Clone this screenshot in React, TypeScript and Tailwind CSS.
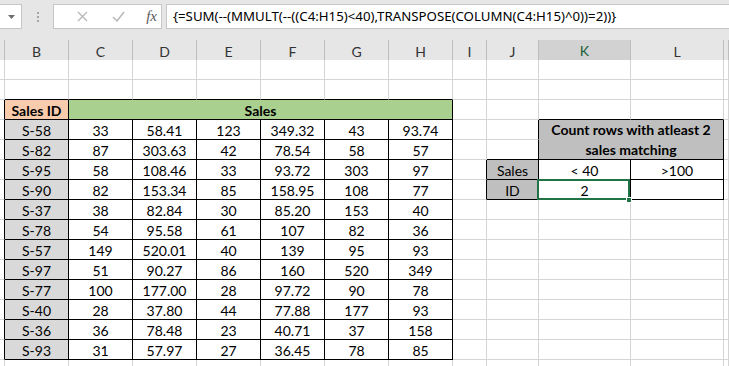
import React from 'react';

type Cell = {
    text?: string;
    bold?: boolean;
    bg?: string;
    colSpan?: number;
    rowSpan?: number;
    skip?: boolean;
    wrap?: boolean;
    selected?: boolean;
};

const COL_LETTERS = ['', 'B', 'C', 'D', 'E', 'F', 'G', 'H', 'I', 'J', 'K', 'L', ''];
const NUM_COLS = 13;
const NUM_ROWS = 16;

const salesData: [string, string[]][] = [
    ['S-58', ['33', '58.41', '123', '349.32', '43', '93.74']],
    ['S-82', ['87', '303.63', '42', '78.54', '58', '57']],
    ['S-95', ['58', '108.46', '33', '93.72', '303', '97']],
    ['S-90', ['82', '153.34', '85', '158.95', '108', '77']],
    ['S-37', ['38', '82.84', '30', '85.20', '153', '40']],
    ['S-78', ['54', '95.58', '61', '107', '82', '36']],
    ['S-57', ['149', '520.01', '40', '139', '95', '93']],
    ['S-97', ['51', '90.27', '86', '160', '520', '349']],
    ['S-77', ['100', '177.00', '28', '97.72', '90', '78']],
    ['S-40', ['28', '37.80', '44', '77.88', '177', '93']],
    ['S-36', ['36', '78.48', '23', '40.71', '37', '158']],
    ['S-93', ['31', '57.97', '27', '36.45', '78', '85']],
];

// rows are 1-based like the sheet, cols 0 = A (narrow), 1 = B ... 12 = M
function buildSheet(): Cell[][] {
    const sheet: Cell[][] = [];
    for (let r = 0; r <= NUM_ROWS; r++) {
        sheet.push(Array.from({ length: NUM_COLS }, () => ({} as Cell)));
    }

    // header row of the table
    sheet[3][1] = { text: 'Sales ID', bold: true, bg: 'peach' };
    sheet[3][2] = { text: 'Sales', bold: true, bg: 'green', colSpan: 6 };
    for (let c = 3; c <= 7; c++) sheet[3][c] = { skip: true };

    salesData.forEach(([id, values], i) => {
        const r = 4 + i;
        sheet[r][1] = { text: id, bg: 'gray' };
        values.forEach((v, j) => {
            sheet[r][2 + j] = { text: v };
        });
    });

    // lookup box on the right
    sheet[4][10] = { text: 'Count rows with atleast 2|sales matching', bold: true, bg: 'dark', colSpan: 2, rowSpan: 2, wrap: true };
    sheet[4][11] = { skip: true };
    sheet[5][10] = { skip: true };
    sheet[5][11] = { skip: true };
    sheet[6][9] = { text: 'Sales', bg: 'dark' };
    sheet[6][10] = { text: '< 40' };
    sheet[6][11] = { text: '>100' };
    sheet[7][9] = { text: 'ID', bg: 'dark' };
    sheet[7][10] = { text: '2', selected: true };

    return sheet;
}

function bordered(r: number, c: number) {
    if (r >= 3 && r <= 15 && c >= 1 && c <= 7) return true;
    if (r >= 4 && r <= 7 && c >= 10 && c <= 11) return true;
    if (r >= 6 && r <= 7 && c === 9) return true;
    return false;
}

const bgClass: Record<string, string> = {
    peach: 'bg-[#f8cbad]',
    green: 'bg-[#a9d08e]',
    gray: 'bg-[#d9d9d9]',
    dark: 'bg-[#bfbfbf]',
};

const spanClass: Record<number, string> = {
    1: '',
    2: 'col-span-2',
    6: 'col-span-6',
};

function FormulaBar() {
    return (
        <div className="h-[40px] bg-[#e6e6e6] flex items-start pt-[4px] font-['Noto_Sans',sans-serif]">
            {/* name box */}
            <div className="w-[22px] h-[25px] bg-white border border-l-0 border-[#c6c6c6] flex items-center justify-end pr-[6px]">
                <svg width="7" height="4" viewBox="0 0 7 4">
                    <path d="M0 0 L7 0 L3.5 4 Z" fill="#6e6e6e" />
                </svg>
            </div>
            <div className="w-[31px] h-[25px] flex flex-col items-center justify-center gap-[2px]">
                <span className="w-[2px] h-[2px] bg-[#a6a6a6]" />
                <span className="w-[2px] h-[2px] bg-[#a6a6a6]" />
                <span className="w-[2px] h-[2px] bg-[#a6a6a6]" />
            </div>
            {/* cancel / enter / fx */}
            <div className="w-[109px] h-[25px] bg-white border border-[#c6c6c6] flex items-center">
                <div className="w-[34px] flex justify-end">
                    <svg width="11" height="11" viewBox="0 0 11 11">
                        <path d="M1 1 L10 10 M10 1 L1 10" stroke="#b8b8b8" strokeWidth="1.4" />
                    </svg>
                </div>
                <div className="w-[38px] flex justify-end">
                    <svg width="13" height="11" viewBox="0 0 13 11">
                        <path d="M1 6 L5 10 L12 1" stroke="#b8b8b8" strokeWidth="1.5" fill="none" />
                    </svg>
                </div>
                <div className="w-[36px] flex justify-end pr-[4px]">
                    <span className="font-['Liberation_Serif',serif] italic text-[15px] text-[#595959] leading-none">fx</span>
                </div>
            </div>
            <div className="w-[4px]" />
            {/* formula */}
            <div className="flex-1 h-[25px] bg-white border border-r-0 border-[#c6c6c6] flex items-center pl-[6px] text-[13.25px] text-black whitespace-nowrap overflow-hidden">
                {'{=SUM(--(MMULT(--((C4:H15)<40),TRANSPOSE(COLUMN(C4:H15)^0))=2))}'}
            </div>
        </div>
    );
}

function ColumnHeaders() {
    return (
        <div className="grid grid-cols-[5px_64px_64px_64px_64px_64px_64px_64px_34px_52px_92px_93px_1fr] h-[20px] bg-[#e6e6e6]">
            {COL_LETTERS.map((letter, c) => (
                <div
                    key={c}
                    className={
                        c === 10
                            ? 'flex items-center justify-center bg-[#d2d2d2] border-r border-r-[#bdbdbd] border-b-2 border-b-[#217346] text-[14px] text-[#1b5e37]'
                            : 'flex items-center justify-center border-r border-r-[#bdbdbd] border-b border-b-[#ababab] text-[14px] text-[#333]'
                    }
                >
                    {letter}
                </div>
            ))}
        </div>
    );
}

export default function App() {
    const sheet = buildSheet();
    const cells: React.ReactNode[] = [];

    for (let r = 1; r <= NUM_ROWS; r++) {
        for (let c = 0; c < NUM_COLS; c++) {
            const cell = sheet[r][c];
            if (cell.skip) continue;
            const cs = cell.colSpan ?? 1;
            const rs = cell.rowSpan ?? 1;
            const rightBlack = bordered(r, c + cs - 1) || bordered(r, c + cs);
            const bottomBlack = bordered(r + rs - 1, c) || bordered(r + rs, c);
            const cls = [
                'relative flex items-center justify-center border-r border-b pt-[1px]',
                rightBlack ? 'border-r-black' : 'border-r-[#d4d4d4]',
                bottomBlack ? 'border-b-black' : 'border-b-[#d4d4d4]',
                cell.bg ? bgClass[cell.bg] : 'bg-white',
                cell.bold ? 'font-bold' : '',
                spanClass[cs],
                rs === 2 ? 'row-span-2' : '',
                cell.wrap ? 'flex-col leading-[20px]' : 'whitespace-nowrap overflow-visible',
                cell.selected ? 'z-10' : '',
            ].join(' ');
            cells.push(
                <div key={`${r}-${c}`} className={cls}>
                    {cell.wrap
                        ? cell.text!.split('|').map((line) => <span key={line}>{line}</span>)
                        : cell.text}
                    {cell.selected && (
                        <div className="absolute left-[-2px] top-[-1px] right-[0px] bottom-[-1px] border-2 border-[#217346]">
                            <div className="absolute right-[-4px] bottom-[-5px] w-[6px] h-[6px] bg-[#217346] border border-white" />
                        </div>
                    )}
                </div>
            );
        }
    }

    return (
        <div className="w-[729px] h-[366px] overflow-hidden bg-white font-['Lato',sans-serif] text-black">
            <FormulaBar />
            <ColumnHeaders />
            <div className="grid grid-cols-[5px_64px_64px_64px_64px_64px_64px_64px_34px_52px_92px_93px_1fr] auto-rows-[20px] text-[14px]">
                {cells}
            </div>
        </div>
    );
}
